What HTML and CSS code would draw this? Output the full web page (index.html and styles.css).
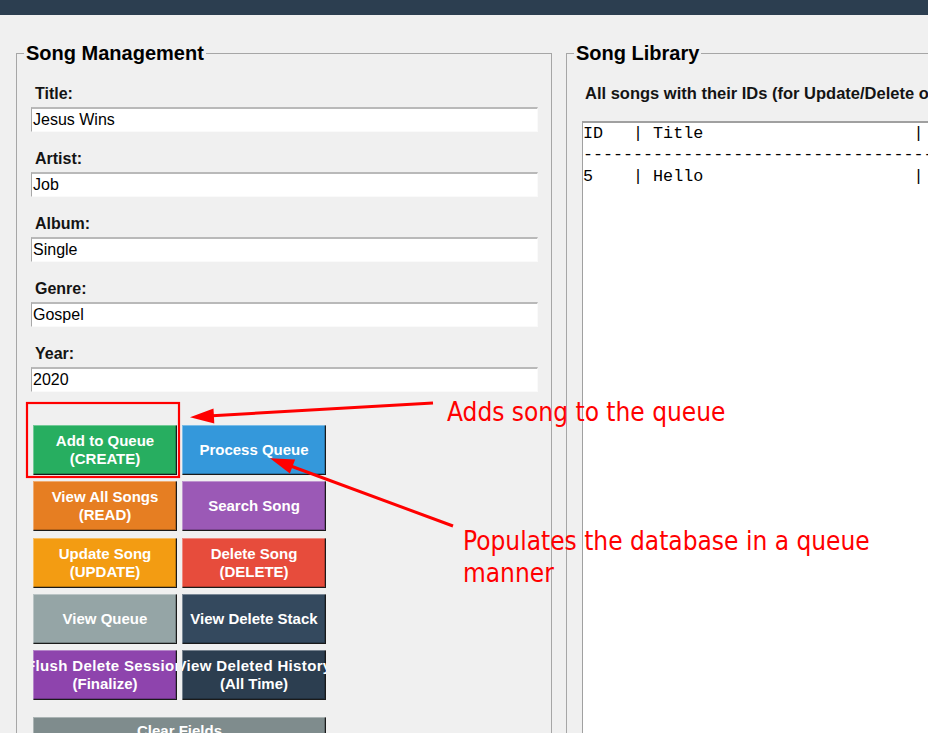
FILE: index.html
```html
<!DOCTYPE html>
<html>
<head>
<meta charset="utf-8">
<link rel="stylesheet" href="styles.css">
</head>
<body>
<div class="topbar"></div>
<div class="main">
  <fieldset class="panel">
    <legend>Song Management</legend>
    <div class="panel-body">
      <div class="fields">
        <div class="field"><span class="field-label">Title:</span><div class="entry">Jesus Wins</div></div>
        <div class="field"><span class="field-label">Artist:</span><div class="entry">Job</div></div>
        <div class="field"><span class="field-label">Album:</span><div class="entry">Single</div></div>
        <div class="field"><span class="field-label">Genre:</span><div class="entry">Gospel</div></div>
        <div class="field"><span class="field-label">Year:</span><div class="entry">2020</div></div>
      </div>
      <div class="btn-grid">
        <div class="btn green"><span>Add to Queue</span><span>(CREATE)</span></div>
        <div class="btn blue"><span>Process Queue</span></div>
        <div class="btn orange"><span>View All Songs</span><span>(READ)</span></div>
        <div class="btn purple"><span>Search Song</span></div>
        <div class="btn yellow"><span>Update Song</span><span>(UPDATE)</span></div>
        <div class="btn red"><span>Delete Song</span><span>(DELETE)</span></div>
        <div class="btn grey"><span>View Queue</span></div>
        <div class="btn slate"><span>View Delete Stack</span></div>
        <div class="btn violet wide"><span>Flush Delete Session</span><span>(Finalize)</span></div>
        <div class="btn navy wide"><span>View Deleted History</span><span>(All Time)</span></div>
      </div>
      <div class="btn btn-clear"><span>Clear Fields</span></div>
    </div>
  </fieldset>
  <fieldset class="panel">
    <legend>Song Library</legend>
    <div class="panel-body">
      <div class="sub">All songs with their IDs (for Update/Delete operations):</div>
      <div class="listing">ID   | Title                     | Artist               | Album
-------------------------------------------------------------------------------------------
5    | Hello                     | Adele                | 25
</div>
    </div>
  </fieldset>
</div>

<svg class="annot-svg" width="928" height="733" viewBox="0 0 928 733">
  <rect x="27" y="403" width="152" height="74" fill="none" stroke="#ff0000" stroke-width="2.2"/>
  <line x1="433" y1="403" x2="208" y2="416" stroke="#ff0000" stroke-width="3"/>
  <polygon points="190,417.3 213.5,408.4 214.3,423.4" fill="#ff0000"/>
  <line x1="453" y1="526" x2="288" y2="465" stroke="#ff0000" stroke-width="3"/>
  <polygon points="270,458.3 295.1,459.6 289.9,473.6" fill="#ff0000"/>
</svg>
<div class="note note-1">Adds song to the queue</div>
<div class="note note-2">Populates the database in a queue<br>manner</div>
</body>
</html>
```

FILE: styles.css
```css
* { box-sizing: border-box; }
html, body { margin: 0; padding: 0; }
body {
  background: #f0f0f0;
  width: 928px;
  height: 733px;
  overflow: hidden;
  position: relative;
  font-family: "Liberation Sans", Arial, sans-serif;
  color: #111;
}
.topbar { height: 15px; background: #2c3e50; }
.main {
  display: flex;
  gap: 14px;
  padding: 27px 0 0 16px;
}
.panel {
  flex: none;
  width: 536px;
  height: 760px;
  margin: 0;
  padding: 0;
  min-width: 0;
  border: 1px solid #a6a6a6;
}
.panel legend {
  font: bold 20px/23px "Liberation Sans", Arial, sans-serif;
  color: #000;
  padding: 0 2px;
  margin-left: 7px;
}
.panel-body { padding: 19px 13px 0 14px; }
.fields { display: flex; flex-direction: column; gap: 17px; }
.field-label {
  display: block;
  font: bold 16px/19px "Liberation Sans", Arial, sans-serif;
  padding-left: 4px;
  margin-bottom: 4px;
  color: #141414;
}
.entry {
  height: 25px;
  background: #fff;
  border-style: solid;
  border-width: 2px 1px 1px 1px;
  border-color: #b9b9b9 #fafafa #fafafa #a8a8a8;
  font: 16px/19px "Liberation Sans", Arial, sans-serif;
  color: #000;
  padding: 1px 1px 0;
  white-space: nowrap;
}
.btn-grid {
  display: grid;
  grid-template-columns: 144px 144px;
  grid-auto-rows: 50px;
  column-gap: 5px;
  row-gap: 6.25px;
  margin: 33px 0 0 2px;
}
.btn {
  display: flex;
  flex-direction: column;
  align-items: center;
  justify-content: center;
  overflow: hidden;
  color: #fff;
  font: bold 15px/18px "Liberation Sans", Arial, sans-serif;
  white-space: nowrap;
  box-shadow: inset 1px 1px 0 rgba(255,255,255,0.35), inset -1px -1px 0 #1a1a1a, inset -2px -2px 0 rgba(0,0,0,0.22);
}
.btn span { flex: none; }
.btn.wide span:first-child { letter-spacing: 0.35px; }
.green { background: #27ae60; }
.blue { background: #3498db; }
.orange { background: #e67e22; }
.purple { background: #9b59b6; }
.yellow { background: #f39c12; }
.red { background: #e74c3c; }
.grey { background: #95a5a6; }
.slate { background: #34495e; }
.violet { background: #8e44ad; }
.navy { background: #2c3e50; }
.btn-clear {
  margin: 16.7px 0 0 2px;
  width: 293px;
  height: 28px;
  background: #7f8c8d;
}
.sub {
  font: bold 16.5px/19px "Liberation Sans", Arial, sans-serif;
  padding-left: 4px;
  white-space: nowrap;
  color: #141414;
}
.listing {
  margin: 18px 0 0 1px;
  height: 700px;
  background: #fff;
  border-style: solid;
  border-width: 2px 0 0 1px;
  border-color: #a0a0a0;
  font: 16.7px/21.33px "Liberation Mono", "Courier New", monospace;
  color: #000;
  white-space: pre;
  overflow: hidden;
}
.annot-svg { position: absolute; left: 0; top: 0; pointer-events: none; }
.note {
  position: absolute;
  color: #ff0000;
  font-family: "DejaVu Sans", sans-serif;
  font-stretch: condensed;
  font-size: 26px;
  line-height: 32px;
  white-space: nowrap;
}
.note-1 { left: 447px; top: 396px; }
.note-2 { left: 463px; top: 525px; }
```
